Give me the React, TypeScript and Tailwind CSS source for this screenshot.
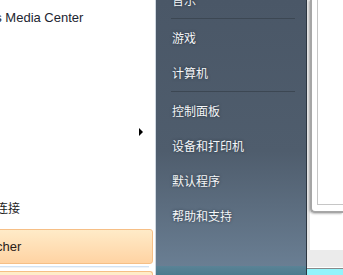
const latin = "font-['Liberation_Sans','Noto_Sans_CJK_SC',sans-serif]"
const cjk = "font-['Noto_Sans_CJK_SC','Liberation_Sans',sans-serif]"

function Separator() {
  return (
    <div className="h-[3px] flex items-center ml-[15px] mr-[11px]">
      <div className="h-px w-full bg-[#3c4753]" />
    </div>
  )
}

function PlaceItem({ label }: { label: string }) {
  return (
    <div className={`h-[35px] flex items-center pl-[16px] text-[12px] text-[#f4f6f8] [text-shadow:0_0_3px_rgba(20,30,40,0.7)] ${cjk}`}>
      {label}
    </div>
  )
}

export default function App() {
  return (
    <div className="w-[343px] h-[275px] flex overflow-hidden bg-white">
      {/* Left: programs list */}
      <div className="w-[156px] shrink-0 flex flex-col bg-white border-r border-[#cfd7e0] overflow-hidden">
        <div className={`h-[36px] flex items-center whitespace-nowrap text-[13px] text-[#1c2530] ${latin}`}>
          <span className="-ml-[51px]">Windows Media Center</span>
        </div>
        <div className="h-[90px]" />
        <div className="h-[12px] flex items-center justify-end pr-[12px]">
          <div className="w-0 h-0 border-y-[4px] border-y-transparent border-l-[4px] border-l-black" />
        </div>
        <div className="h-[58px]" />
        <div className={`h-[24px] flex items-center whitespace-nowrap text-[12px] text-[#1c1c1c] ${cjk}`}>
          <span className="-ml-[52px]">远程桌面连接</span>
        </div>
        <div className="h-[9px]" />
        <div className="h-[35px] -ml-[6px] mr-[2px] flex items-center whitespace-nowrap rounded-[3px] border border-[#f6bf86] bg-linear-to-b from-[#ffebc8] to-[#ffd3a3]">
          <span className={`-ml-[28px] text-[13px] text-[#2a2118] ${latin}`}>Launcher</span>
        </div>
        <div className="h-[2px]" />
        <div className="h-px mr-[6px] bg-[#d3e2f2]" />
        <div className="h-px mr-[6px] bg-[#eef4fa]" />
        <div className="h-[3px]" />
        <div className="flex-1 -ml-[6px] mr-[2px] rounded-t-[3px] border border-b-0 border-[#f6bf86] bg-[#ffecc9]" />
      </div>

      {/* Middle: places pane */}
      <div className="w-[151px] shrink-0 flex flex-col border-r border-[#2c3641] bg-linear-to-b from-[#4a5767] via-[#4f5d6d] via-55% to-[#6c8196] overflow-hidden relative">
        <div className="-mt-[18px]">
          <PlaceItem label="音乐" />
          <Separator />
          <PlaceItem label="游戏" />
          <PlaceItem label="计算机" />
          <Separator />
          <PlaceItem label="控制面板" />
          <PlaceItem label="设备和打印机" />
          <PlaceItem label="默认程序" />
          <PlaceItem label="帮助和支持" />
        </div>
        <div className="flex-1" />
        <div className="h-[9px] bg-linear-to-b from-[#5a8396] to-[#4b7b8e]" />
      </div>

      {/* Right: window behind the menu */}
      <div className="flex-1 flex flex-col">
        <div className="h-[250px] flex">
          <div className="w-[3px] bg-[#e4e4e4]" />
          <div className="flex-1 flex flex-col">
            <div className="h-[213px] flex">
              <div className="flex-1 flex flex-col border-l-2 border-b-2 border-[#a6a6a6] rounded-bl-[5px] shadow-[-1px_1px_2px_rgba(0,0,0,0.25)] bg-white">
                <div className="h-[205px] ml-[5px] border-l border-b border-[#c6c6c6]" />
              </div>
            </div>
          </div>
        </div>
        <div className="h-[17px] bg-[#ebebeb]" />
        <div className="h-px bg-white" />
        <div className="h-px bg-[#8a8a8a]" />
        <div className="flex-1 bg-[#93f4fb]" />
      </div>
    </div>
  )
}
